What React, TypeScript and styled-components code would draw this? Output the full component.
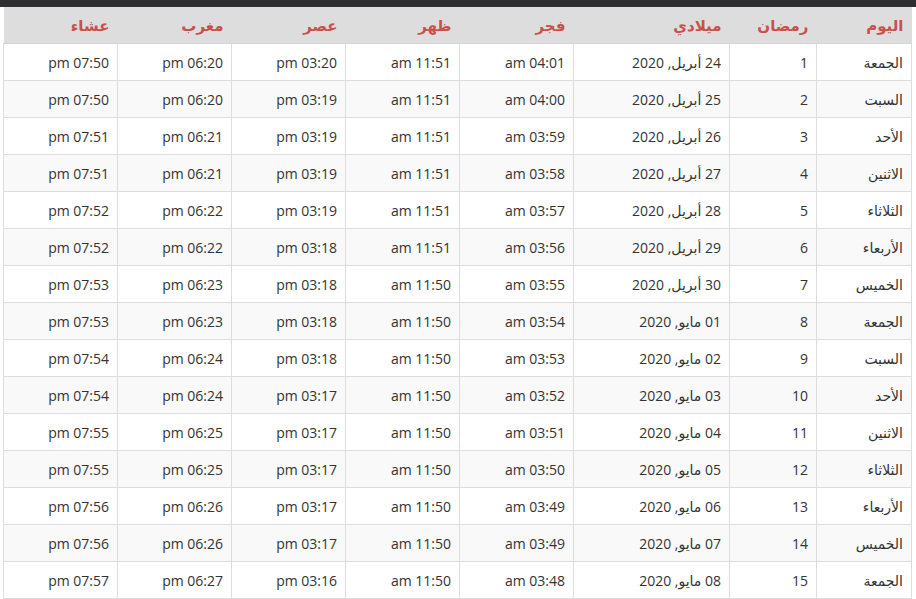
import React from "react";
import styled, { createGlobalStyle } from "styled-components";

const GlobalStyle = createGlobalStyle`
  html, body {
    margin: 0;
    padding: 0;
    background: #fff;
  }
  body {
    font-family: "Open Sans", "DejaVu Sans", sans-serif;
    color: #333;
  }
`;

const TopBar = styled.div`
  height: 7px;
  background: #2e2e30;
`;

const Wrapper = styled.div`
  padding: 0 4px;
  direction: rtl;
`;

const Table = styled.table`
  width: 908px;
  border-collapse: collapse;
  table-layout: fixed;
  font-size: 14px;
`;

const HeadCell = styled.th`
  height: 36px;
  padding: 0 8px;
  background: #dddddd;
  color: #c9514c;
  font-weight: 700;
  font-size: 15px;
  text-align: right;
  border-bottom: 1px solid #d4d4d4;
`;

const Row = styled.tr<{ $striped: boolean }>`
  background: ${({ $striped }) => ($striped ? "#f9f9f9" : "#fff")};
`;

const Cell = styled.td`
  height: 36px;
  padding: 0 8px;
  text-align: right;
  color: #333;
  border: 1px solid #dddddd;
  white-space: nowrap;
`;

const widths = [95, 87, 156, 114, 114, 114, 114, 114];
const headers = ["اليوم", "رمضان", "ميلادي", "فجر", "ظهر", "عصر", "مغرب", "عشاء"];

const days = ["الجمعة", "السبت", "الأحد", "الاثنين", "الثلاثاء", "الأربعاء", "الخميس"];
const dates = [
  "24 أبريل, 2020", "25 أبريل, 2020", "26 أبريل, 2020", "27 أبريل, 2020",
  "28 أبريل, 2020", "29 أبريل, 2020", "30 أبريل, 2020", "01 مايو, 2020",
  "02 مايو, 2020", "03 مايو, 2020", "04 مايو, 2020", "05 مايو, 2020",
  "06 مايو, 2020", "07 مايو, 2020", "08 مايو, 2020",
];
const fajr = ["04:01", "04:00", "03:59", "03:58", "03:57", "03:56", "03:55", "03:54", "03:53", "03:52", "03:51", "03:50", "03:49", "03:49", "03:48"];
const asr = ["03:20", "03:19", "03:19", "03:19", "03:19", "03:18", "03:18", "03:18", "03:18", "03:17", "03:17", "03:17", "03:17", "03:17", "03:16"];
const maghrib = ["06:20", "06:20", "06:21", "06:21", "06:22", "06:22", "06:23", "06:23", "06:24", "06:24", "06:25", "06:25", "06:26", "06:26", "06:27"];
const isha = ["07:50", "07:50", "07:51", "07:51", "07:52", "07:52", "07:53", "07:53", "07:54", "07:54", "07:55", "07:55", "07:56", "07:56", "07:57"];

const rows = dates.map((date, i) => [
  days[i % 7],
  String(i + 1),
  date,
  `${fajr[i]} am`,
  `${i < 6 ? "11:51" : "11:50"} am`,
  `${asr[i]} pm`,
  `${maghrib[i]} pm`,
  `${isha[i]} pm`,
]);

export default function App() {
  return (
    <>
      <GlobalStyle />
      <TopBar />
      <Wrapper>
        <Table>
          <colgroup>
            {widths.map((w, i) => (
              <col key={i} style={{ width: w }} />
            ))}
          </colgroup>
          <thead>
            <tr>
              {headers.map((h) => (
                <HeadCell key={h}>{h}</HeadCell>
              ))}
            </tr>
          </thead>
          <tbody>
            {rows.map((r, i) => (
              <Row key={i} $striped={i % 2 === 1}>
                {r.map((c, j) => (
                  <Cell key={j}>{c}</Cell>
                ))}
              </Row>
            ))}
          </tbody>
        </Table>
      </Wrapper>
    </>
  );
}
